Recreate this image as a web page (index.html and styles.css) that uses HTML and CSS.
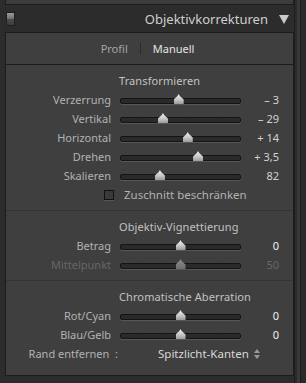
FILE: index.html
```html
<!DOCTYPE html>
<html lang="de">
<head>
    <meta charset="UTF-8">
    <title>Objektivkorrekturen</title>
    <link rel="stylesheet" href="styles.css">
</head>
<body>
    <div class="app">
        <div class="main">
            <div class="prev-panel"></div>

            <div class="header">
                <span class="toggle"></span>
                <span class="title">Objektivkorrekturen</span>
                <svg class="arrow" width="10" height="9" viewBox="0 0 10 9">
                    <path d="M0 0H10L5 9Z" fill="#c9c9c9"/>
                </svg>
            </div>

            <div class="panel">
                <div class="tabs">
                    <span class="tab">Profil</span>
                    <span class="tab-sep"></span>
                    <span class="tab active">Manuell</span>
                </div>

                <div class="section">
                    <div class="section-title">Transformieren</div>
                    <div class="row">
                        <span class="label">Verzerrung</span>
                        <div class="slider"><span class="ticks"></span><span class="thumb" style="left: 48.5%"></span></div>
                        <span class="value">– 3</span>
                    </div>
                    <div class="row">
                        <span class="label">Vertikal</span>
                        <div class="slider"><span class="ticks"></span><span class="thumb" style="left: 35.5%"></span></div>
                        <span class="value">– 29</span>
                    </div>
                    <div class="row">
                        <span class="label">Horizontal</span>
                        <div class="slider"><span class="ticks"></span><span class="thumb" style="left: 56%"></span></div>
                        <span class="value">+ 14</span>
                    </div>
                    <div class="row">
                        <span class="label">Drehen</span>
                        <div class="slider"><span class="ticks"></span><span class="thumb" style="left: 64.5%"></span></div>
                        <span class="value">+ 3,5</span>
                    </div>
                    <div class="row">
                        <span class="label">Skalieren</span>
                        <div class="slider"><span class="ticks"></span><span class="thumb" style="left: 33%"></span></div>
                        <span class="value">82</span>
                    </div>
                    <div class="check-row">
                        <span class="checkbox"></span>
                        <span class="check-label">Zuschnitt beschränken</span>
                    </div>
                </div>

                <div class="section">
                    <div class="section-title">Objektiv-Vignettierung</div>
                    <div class="row">
                        <span class="label">Betrag</span>
                        <div class="slider"><span class="ticks"></span><span class="thumb" style="left: 50%"></span></div>
                        <span class="value bright">0</span>
                    </div>
                    <div class="row disabled">
                        <span class="label">Mittelpunkt</span>
                        <div class="slider"><span class="ticks"></span><span class="thumb" style="left: 50%"></span></div>
                        <span class="value">50</span>
                    </div>
                </div>

                <div class="section last">
                    <div class="section-title">Chromatische Aberration</div>
                    <div class="row">
                        <span class="label">Rot/Cyan</span>
                        <div class="slider"><span class="ticks"></span><span class="thumb" style="left: 50%"></span></div>
                        <span class="value bright">0</span>
                    </div>
                    <div class="row">
                        <span class="label">Blau/Gelb</span>
                        <div class="slider"><span class="ticks"></span><span class="thumb" style="left: 50%"></span></div>
                        <span class="value bright">0</span>
                    </div>
                    <div class="row popup-row">
                        <span class="label">Rand entfernen&nbsp; :</span>
                        <div class="popup">
                            Spitzlicht-Kanten
                            <svg width="6" height="10" viewBox="0 0 6 10">
                                <path d="M3 0L6 4H0Z M0 6H6L3 10Z" fill="#9a9a9a"/>
                            </svg>
                        </div>
                    </div>
                </div>
            </div>
        </div>

        <div class="scrollbar"><span class="scroll-track"></span></div>
    </div>
</body>
</html>
```

FILE: styles.css
```css
* {
    box-sizing: border-box;
}

body {
    margin: 0;
    background: #2c2c2c;
    font-family: "Noto Sans", "Open Sans", sans-serif;
    font-size: 11px;
    color: #b2b2b2;
    overflow: hidden;
}

.app {
    display: flex;
    height: 383px;
}

.main {
    flex: 0 0 294px;
    padding-left: 5px;
}

.prev-panel {
    height: 5px;
    background: #3c3c3c;
    border: 1px solid #1c1c1c;
    border-top: none;
}

.header {
    display: flex;
    align-items: center;
    height: 27px;
    padding-left: 1px;
    padding-right: 5px;
}

.toggle {
    width: 9px;
    height: 14px;
    margin-top: 1px;
    border: 1px solid #1e1e1e;
    background: linear-gradient(#9a9a9a, #6e6e6e 50%, #4a4a4a 52%, #3e3e3e);
}

.title {
    flex: 1;
    text-align: right;
    font-size: 13px;
    color: #cfcfcf;
    padding-right: 11px;
    margin-top: 1px;
}

.arrow {
    display: block;
    margin-top: 1px;
}

.panel {
    background: #3f3f3f;
    border: 1px solid #1c1c1c;
    height: 344px;
}

.tabs {
    display: flex;
    justify-content: center;
    align-items: center;
    gap: 12px;
    height: 32px;
    padding-right: 4px;
    border-bottom: 1px solid #1c1c1c;
}

.tab {
    font-size: 11px;
    color: #a4a4a4;
}

.tab.active {
    color: #e4e4e4;
}

.tab-sep {
    width: 1px;
    height: 11px;
    background: #2a2a2a;
}

.section {
    padding: 6px 0 6px;
    border-bottom: 1px solid #333333;
}

.section:first-of-type {
    padding-top: 7px;
}

.section.last {
    border-bottom: none;
}

.section-title {
    height: 19px;
    line-height: 19px;
    padding-left: 113px;
    font-size: 11px;
    letter-spacing: 0.1px;
    color: #c2c2c2;
}

.row {
    display: grid;
    grid-template-columns: 105px 9px 121px 38px;
    height: 19px;
    align-items: center;
}

.label {
    grid-column: 1;
    text-align: right;
    white-space: nowrap;
}

.slider {
    grid-column: 3;
    position: relative;
    height: 19px;
}

.slider::before {
    content: "";
    position: absolute;
    left: 0;
    right: 0;
    top: 8px;
    height: 4px;
    border-radius: 2px;
    background: #2a2a2a;
    border: 1px solid #141414;
    box-shadow: 0 1px 0 #575757;
}

.ticks {
    position: absolute;
    left: 3px;
    width: 116px;
    top: 3px;
    height: 1px;
    background: repeating-linear-gradient(to right, #353535 0 1px, transparent 1px 11.5px);
}

.thumb {
    position: absolute;
    top: 4px;
    width: 10px;
    height: 10px;
    margin-left: -5px;
    background: linear-gradient(#f4f4f4, #c4c4c4 60%, #9a9a9a);
    clip-path: polygon(50% 0, 62% 20%, 100% 55%, 100% 100%, 0 100%, 0 55%, 38% 20%);
}

.value {
    grid-column: 4;
    text-align: right;
    color: #d2d2d2;
}

.value.bright {
    color: #f0f0f0;
}

.row.disabled .label,
.row.disabled .value {
    color: #666666;
}

.row.disabled .thumb {
    background: linear-gradient(#8c8c8c, #6e6e6e);
}

.check-row {
    display: flex;
    align-items: center;
    height: 19px;
    padding-left: 98px;
    gap: 10px;
}

.checkbox {
    width: 10px;
    height: 10px;
    border: 1px solid #121212;
    background: #3a3a3a;
    box-shadow: 0 1px 0 #555555;
}

.check-label {
    font-size: 11.5px;
    color: #b2b2b2;
}

.popup-row .label {
    margin-right: -7px;
}

.popup {
    grid-column: 3 / 5;
    display: flex;
    align-items: center;
    gap: 5px;
    padding-left: 38px;
    font-size: 11.5px;
    color: #d8d8d8;
}

.scrollbar {
    flex: 1;
    display: flex;
    padding-left: 2px;
    border-left: 1px solid #1e1e1e;
    background: #2a2a2a;
}

.scroll-track {
    width: 4px;
    border-right: 1px solid #1a1a1a;
    background: #393939;
}
```
